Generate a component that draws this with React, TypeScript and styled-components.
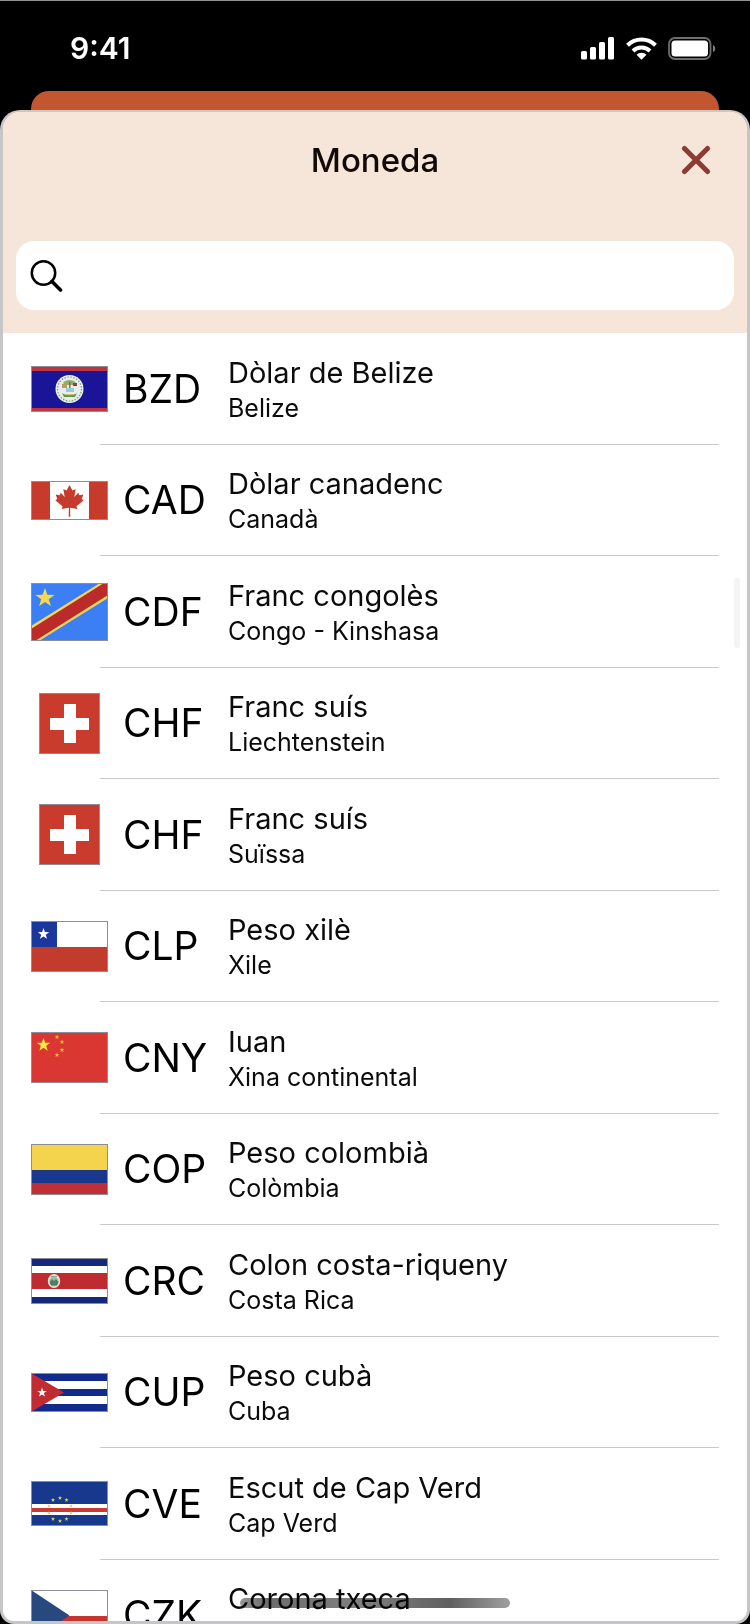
import React, { useState } from 'react';
import styled, { createGlobalStyle } from 'styled-components';

const GlobalStyle = createGlobalStyle`
    * {
        box-sizing: border-box;
    }

    body {
        margin: 0;
        background-color: #000;
        font-family: Inter, "Liberation Sans", sans-serif;
        color: #0b0b0b;
    }
`;

const Screen = styled.div`
    display: flex;
    flex-direction: column;
    height: 100vh;
    overflow: hidden;
    position: relative;
    background-color: #000;
    border-top: 1px solid #8f908f;
`;

const StatusBar = styled.div`
    display: flex;
    flex: none;
    align-items: center;
    justify-content: space-between;
    height: 90px;
    padding: 4px 34px 0 70px;
    color: #fff;
`;

const Time = styled.span`
    font-size: 30px;
    font-weight: 600;
    line-height: 36px;
`;

const StatusIcons = styled.div`
    display: flex;
    align-items: center;
    gap: 11px;
`;

const PreviousScreen = styled.div`
    flex: none;
    height: 19px;
    margin: 0 31px;
    border-radius: 18px 18px 0 0;
    background-color: #c15630;
`;

const Sheet = styled.main`
    display: flex;
    flex: 1;
    flex-direction: column;
    min-height: 0;
    overflow: hidden;
    position: relative;
    background-color: #fff;
    border: 3px solid #c6c6c8;
    border-top: 2px solid #d3c5bd;
    border-radius: 20px 20px 14px 14px;
`;

const Header = styled.header`
    flex: none;
    padding: 0 13px 23px;
    background-color: #f6e5d9;
`;

const TitleRow = styled.div`
    display: grid;
    grid-template-columns: 76px 1fr 76px;
    align-items: center;
    height: 95px;
    margin-bottom: 34px;
`;

const Title = styled.h1`
    grid-column: 2;
    margin: 0;
    font-size: 33px;
    font-weight: 500;
    line-height: 40px;
    text-align: center;
    color: #120a06;
`;

const CloseButton = styled.button`
    display: flex;
    align-items: center;
    justify-content: center;
    height: 76px;
    padding: 0;
    border: none;
    background: none;
    cursor: pointer;
`;

const SearchBox = styled.label`
    display: flex;
    align-items: center;
    gap: 12px;
    height: 69px;
    padding: 0 14px;
    border-radius: 18px;
    background-color: #fff;
`;

const SearchInput = styled.input`
    flex: 1;
    min-width: 0;
    border: none;
    outline: none;
    background: none;
    font-family: inherit;
    font-size: 29px;
`;

const List = styled.ul`
    flex: 1;
    min-height: 0;
    margin: 0;
    padding: 0;
    overflow: hidden;
    list-style: none;
`;

const Item = styled.li`
    height: 112px;

    &:nth-child(even) {
        height: 111px;
    }

    &::after {
        content: '';
        display: block;
        height: 1px;
        margin: 0 28px 0 97px;
        background-color: #c9c9cb;
    }
`;

const Row = styled.button`
    display: grid;
    grid-template-columns: 77px 90px 1fr;
    column-gap: 15px;
    align-items: center;
    width: 100%;
    height: calc(100% - 1px);
    padding: 0 28px;
    border: none;
    background: none;
    font-family: inherit;
    color: inherit;
    text-align: left;
    cursor: pointer;
`;

const FlagSlot = styled.span`
    display: flex;
    justify-content: center;
`;

const FlagFrame = styled.svg`
    display: block;
    outline: 1px solid #8d8d96;
    outline-offset: -1px;
`;

const Code = styled.span`
    font-size: 39px;
    line-height: 48px;
    color: #000;
`;

const Names = styled.span`
    display: flex;
    flex-direction: column;
`;

const CurrencyName = styled.span`
    font-size: 29px;
    line-height: 38px;
`;

const CountryName = styled.span`
    font-size: 25px;
    line-height: 32px;
`;

const ScrollThumb = styled.div`
    position: absolute;
    top: 466px;
    right: 7px;
    width: 6px;
    height: 70px;
    border-radius: 3px;
    background-color: #f4f4f4;
`;

const HomeIndicator = styled.div`
    position: absolute;
    bottom: 16px;
    left: 32%;
    right: 32%;
    height: 10px;
    border-radius: 5px;
    background: linear-gradient(90deg, #999 0%, #6c6c6c 10%, #808080 45%, #5f5f5f 78%, #a0a0a0 100%);
    mix-blend-mode: multiply;
`;

interface StarProps {
    cx: number;
    cy: number;
    r: number;
    fill: string;
}

const Star: React.FC<StarProps> = ({ cx, cy, r, fill }) => {
    const points = Array.from({ length: 10 }, (_, i) => {
        const radius = i % 2 === 0 ? r : r * 0.4;
        const angle = (Math.PI / 5) * i - Math.PI / 2;
        return `${cx + radius * Math.cos(angle)},${cy + radius * Math.sin(angle)}`;
    });
    return <polygon points={points.join(' ')} fill={fill} />;
};

interface FlagProps {
    width?: number;
    height: number;
    children: React.ReactNode;
}

const Flag: React.FC<FlagProps> = ({ width = 77, height, children }) => (
    <FlagFrame width={width} height={height} viewBox={`0 0 ${width} ${height}`} aria-hidden="true">
        {children}
    </FlagFrame>
);

const BelizeFlag = () => (
    <Flag height={46}>
        <rect width="77" height="46" fill="#c0343f" />
        <rect y="5" width="77" height="37" fill="#1a1596" />
        <circle cx="38.5" cy="23" r="14" fill="#e9eeea" />
        <circle cx="38.5" cy="23" r="12" fill="none" stroke="#7d9d80" strokeWidth="1.2" strokeDasharray="1.5 1.5" />
        <path d="M32 17c2-4 11-4 13 0l-2 2h-9z" fill="#8fae6c" />
        <path d="M38 16h1.5v8H38z" fill="#8b6b45" />
        <path d="M31 18h5v4h-5z" fill="#b99a6a" />
        <path d="M42 17h4v3h-4z" fill="#a33b38" />
        <path d="M35 22h8v4h-8z" fill="#9cc8e0" />
        <path d="M31 27c4 3 11 3 15 0l-2 4H33z" fill="#5d9553" />
        <path d="M34 28h9v1h-9z" fill="#d9c25c" />
    </Flag>
);

const CanadaFlag = () => (
    <Flag height={39}>
        <rect width="77" height="39" fill="#fff" />
        <rect width="19" height="39" fill="#c63b2b" />
        <rect x="58" width="19" height="39" fill="#c63b2b" />
        <path
            d="M38.5 4l3 5.500 3.200-1.600-1.400 8 4-4.200 1 2.500 4-.8-1.600 4.600 2 1.300-7.200 6 .8 2.600-7.200-1.200.2 9h-1.600l.2-9-7.200 1.200.8-2.600-7.200-6 2-1.300-1.600-4.600 4 .8 1-2.500 4 4.200-1.400-8 3.200 1.600z"
            fill="#c63b2b"
        />
    </Flag>
);

const CongoFlag = () => (
    <Flag height={58}>
        <rect width="77" height="58" fill="#3c7ff5" />
        <path d="M0 43L69 0h8v15L8 58H0z" fill="#f3d55b" />
        <path d="M0 46L73 0h4v12L4 58H0z" fill="#bb2b29" />
        <Star cx={14} cy={15} r={10} fill="#f3d94f" />
    </Flag>
);

const SwissFlag = () => (
    <Flag width={61} height={61}>
        <rect width="61" height="61" fill="#c93b2c" />
        <path d="M25 11h12v14h13v12H37v13H25V37H11V25h14z" fill="#fff" />
    </Flag>
);

const ChileFlag = () => (
    <Flag height={51}>
        <rect width="77" height="51" fill="#fff" />
        <rect y="26" width="77" height="25" fill="#c33b2c" />
        <rect width="26" height="26" fill="#1a389c" />
        <Star cx={12.5} cy={13} r={6} fill="#fff" />
    </Flag>
);

const ChinaFlag = () => (
    <Flag height={51}>
        <rect width="77" height="51" fill="#da3732" />
        <Star cx={12.5} cy={13} r={7} fill="#fcec3d" />
        <Star cx={26} cy={5} r={2.5} fill="#f5c342" />
        <Star cx={31} cy={10} r={2.5} fill="#f5c342" />
        <Star cx={31} cy={18} r={2.5} fill="#f5c342" />
        <Star cx={26} cy={23} r={2.5} fill="#f5c342" />
    </Flag>
);

const ColombiaFlag = () => (
    <Flag height={51}>
        <rect width="77" height="26" fill="#f3d44c" />
        <rect y="26" width="77" height="13" fill="#17388c" />
        <rect y="39" width="77" height="12" fill="#bf2f35" />
    </Flag>
);

const CostaRicaFlag = () => (
    <Flag height={46}>
        <rect width="77" height="46" fill="#15297c" />
        <rect y="8" width="77" height="31" fill="#fff" />
        <rect y="15" width="77" height="16" fill="#be2b31" />
        <ellipse cx="23" cy="23" rx="6.2" ry="7" fill="#ece3d0" />
        <ellipse cx="23" cy="23.5" rx="4.5" ry="5" fill="#a5bba5" />
        <path d="M18.5 24l2.500-3 2 2 2-2 2.500 3-1.500 3.500h-6z" fill="#4c7f68" />
        <path d="M20 18h6v1h-6z" fill="#8aa7a0" />
    </Flag>
);

const CubaFlag = () => (
    <Flag height={39}>
        <rect width="77" height="39" fill="#102b8c" />
        <rect y="8" width="77" height="8" fill="#fff" />
        <rect y="23" width="77" height="8" fill="#fff" />
        <path d="M0 0l33 19.500L0 39z" fill="#c12b32" />
        <Star cx={11} cy={19.5} r={5} fill="#fff" />
    </Flag>
);

const CapeVerdeFlag = () => (
    <Flag height={45}>
        <rect width="77" height="45" fill="#17388c" />
        <rect y="23" width="77" height="11" fill="#fff" />
        <rect y="27" width="77" height="4" fill="#c83c37" />
        {[[29, 17], [22, 19], [35.5, 19], [22, 38], [35.5, 38], [29, 40]].map(([x, y]) => (
            <Star key={`${x}-${y}`} cx={x} cy={y} r={2.2} fill="#d9d95c" />
        ))}
        {[[18, 25], [40, 25], [18, 32], [40, 32]].map(([x, y]) => (
            <Star key={`${x}-${y}`} cx={x} cy={y} r={2} fill="#f3c56a" />
        ))}
    </Flag>
);

const CzechFlag = () => (
    <Flag height={51}>
        <rect width="77" height="51" fill="#fff" />
        <rect y="26" width="77" height="25" fill="#c5352f" />
        <path d="M0 0l38.500 25.500L0 51z" fill="#27497f" />
    </Flag>
);

interface Currency {
    code: string;
    name: string;
    country: string;
    flag: React.FC;
}

const currencies: Currency[] = [
    { code: 'BZD', name: 'Dòlar de Belize', country: 'Belize', flag: BelizeFlag },
    { code: 'CAD', name: 'Dòlar canadenc', country: 'Canadà', flag: CanadaFlag },
    { code: 'CDF', name: 'Franc congolès', country: 'Congo - Kinshasa', flag: CongoFlag },
    { code: 'CHF', name: 'Franc suís', country: 'Liechtenstein', flag: SwissFlag },
    { code: 'CHF', name: 'Franc suís', country: 'Suïssa', flag: SwissFlag },
    { code: 'CLP', name: 'Peso xilè', country: 'Xile', flag: ChileFlag },
    { code: 'CNY', name: 'Iuan', country: 'Xina continental', flag: ChinaFlag },
    { code: 'COP', name: 'Peso colombià', country: 'Colòmbia', flag: ColombiaFlag },
    { code: 'CRC', name: 'Colon costa-riqueny', country: 'Costa Rica', flag: CostaRicaFlag },
    { code: 'CUP', name: 'Peso cubà', country: 'Cuba', flag: CubaFlag },
    { code: 'CVE', name: 'Escut de Cap Verd', country: 'Cap Verd', flag: CapeVerdeFlag },
    { code: 'CZK', name: 'Corona txeca', country: 'Txèquia', flag: CzechFlag },
];

const SignalIcon = () => (
    <svg width="34" height="23" viewBox="0 0 34 23" fill="#fff" aria-hidden="true">
        <rect x="0" y="14" width="6" height="8.5" rx="1.5" />
        <rect x="9" y="10" width="6" height="12.5" rx="1.5" />
        <rect x="18" y="5" width="6" height="17.5" rx="1.5" />
        <rect x="27" y="0" width="6" height="22.5" rx="1.5" />
    </svg>
);

const WifiIcon = () => (
    <svg width="31" height="23" viewBox="0 0 31 23" aria-hidden="true">
        <g fill="none" stroke="#fff" strokeWidth="4">
            <path d="M1.5 8.300a20 20 0 0 1 28 0" />
            <path d="M7 14a12.200 12.200 0 0 1 17 0" />
        </g>
        <path d="M15.5 22.800l-5-5a7.200 7.200 0 0 1 10 0z" fill="#fff" />
    </svg>
);

const BatteryIcon = () => (
    <svg width="48" height="23" viewBox="0 0 48 23" aria-hidden="true">
        <rect x="1" y="1" width="41.5" height="21" rx="6" fill="none" stroke="#6e6e6e" strokeWidth="1.8" />
        <rect x="3.5" y="3.5" width="36.5" height="16" rx="3.5" fill="#fff" />
        <path d="M45 8c3 1 3 6 0 7z" fill="#7c7c7c" />
    </svg>
);

const CloseIcon = () => (
    <svg width="30" height="30" viewBox="0 0 30 30" aria-hidden="true">
        <path d="M3.5 3.500l23 23M26.500 3.500l-23 23" stroke="#8c3a35" strokeWidth="5" strokeLinecap="round" />
    </svg>
);

const SearchIcon = () => (
    <svg width="34" height="34" viewBox="0 0 34 34" fill="none" stroke="#000" aria-hidden="true">
        <circle cx="13.5" cy="14" r="11.7" strokeWidth="2.5" />
        <path d="M22 22.500l8.500 8.500" strokeWidth="3.6" strokeLinecap="round" />
    </svg>
);

const App: React.FC = () => {
    const [query, setQuery] = useState<string>('');
    const visible = currencies.filter(({ code, name, country }) =>
        `${code} ${name} ${country}`.toLowerCase().includes(query.toLowerCase())
    );

    return (
        <>
            <GlobalStyle />
            <Screen>
                <StatusBar>
                    <Time>9:41</Time>
                    <StatusIcons>
                        <SignalIcon />
                        <WifiIcon />
                        <BatteryIcon />
                    </StatusIcons>
                </StatusBar>
                <PreviousScreen />
                <Sheet>
                    <Header>
                        <TitleRow>
                            <Title>Moneda</Title>
                            <CloseButton type="button" aria-label="Tanca">
                                <CloseIcon />
                            </CloseButton>
                        </TitleRow>
                        <SearchBox>
                            <SearchIcon />
                            <SearchInput
                                type="text"
                                aria-label="Cerca"
                                value={query}
                                onChange={(e) => setQuery(e.target.value)}
                            />
                        </SearchBox>
                    </Header>
                    <List>
                        {visible.map(({ code, name, country, flag: CountryFlag }) => (
                            <Item key={`${code}-${country}`}>
                                <Row type="button">
                                    <FlagSlot>
                                        <CountryFlag />
                                    </FlagSlot>
                                    <Code>{code}</Code>
                                    <Names>
                                        <CurrencyName>{name}</CurrencyName>
                                        <CountryName>{country}</CountryName>
                                    </Names>
                                </Row>
                            </Item>
                        ))}
                    </List>
                    <ScrollThumb />
                </Sheet>
                <HomeIndicator />
            </Screen>
        </>
    );
};

export default App;
